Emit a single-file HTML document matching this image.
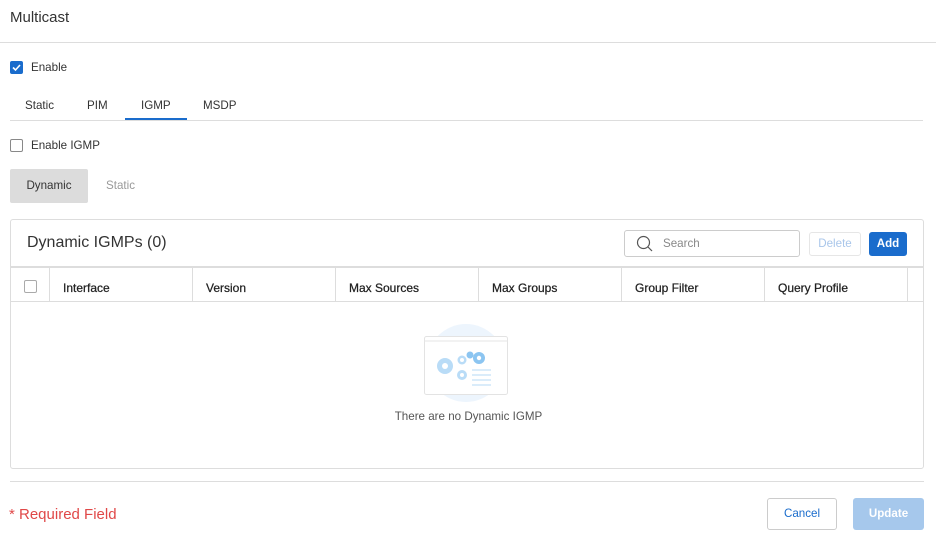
<!DOCTYPE html>
<html><head><meta charset="utf-8"><style>
*{box-sizing:border-box;margin:0;padding:0}
body{width:936px;height:558px;background:#fff;font-family:"Liberation Sans",sans-serif;color:#333;position:relative;overflow:hidden;font-size:11.6px}
.a{position:absolute}
.cb{position:absolute;width:13px;height:13px;border:1px solid #888;border-radius:2px;background:#fff}
.col{position:absolute;top:0;height:34px;border-left:1px solid #ddd;padding-left:13px;line-height:40px;font-size:12px;color:#222;-webkit-text-stroke:0.25px #222}
</style></head><body>
<div class="a" style="left:10px;top:9px;font-size:15px;color:#333">Multicast</div>
<div class="a" style="left:0;top:42px;width:936px;height:1px;background:#ddd"></div>
<div class="cb" style="left:10px;top:61px;background:#1a6ccc;border-color:#1a6ccc"><svg width="11" height="11" viewBox="0 0 11 11" style="position:absolute;left:0;top:0"><path d="M2 5.5 L4.5 8 L9 3" stroke="#fff" stroke-width="1.6" fill="none"/></svg></div>
<div class="a" style="left:31px;top:61px">Enable</div>
<div class="a" style="left:25px;top:99px">Static</div>
<div class="a" style="left:87px;top:99px">PIM</div>
<div class="a" style="left:141px;top:99px">IGMP</div>
<div class="a" style="left:203px;top:99px">MSDP</div>
<div class="a" style="left:10px;top:120px;width:913px;height:1px;background:#ddd"></div>
<div class="a" style="left:125px;top:118px;width:62px;height:2px;background:#1a6ccc"></div>
<div class="cb" style="left:10px;top:139px"></div>
<div class="a" style="left:31px;top:139px">Enable IGMP</div>
<div class="a" style="left:10px;top:169px;width:78px;height:34px;background:#dcdcdc;border-radius:2px;text-align:center;line-height:34px;color:#333">Dynamic</div>
<div class="a" style="left:106px;top:179px;color:#999">Static</div>
<div class="a" style="left:10px;top:219px;width:914px;height:250px;border:1px solid #ddd;border-radius:3px"></div>
<div class="a" style="left:27px;top:234px;font-size:16px;color:#333">Dynamic IGMPs (0)</div>
<div class="a" style="left:624px;top:230px;width:176px;height:27px;border:1px solid #ccc;border-radius:3px"><svg width="20" height="20" viewBox="0 0 20 20" style="position:absolute;left:10px;top:3px"><circle cx="8.5" cy="8.5" r="6" stroke="#555" stroke-width="1.2" fill="none"/><path d="M13 13 L17 17" stroke="#555" stroke-width="1.2"/></svg><span style="position:absolute;left:38px;top:6px;color:#888">Search</span></div>
<div class="a" style="left:809px;top:232px;width:52px;height:24px;border:1px solid #e6e6e6;border-radius:3px;color:#a9c6ea;text-align:center;line-height:22px">Delete</div>
<div class="a" style="left:869px;top:232px;width:38px;height:24px;background:#1a6ccc;border-radius:3px;color:#fff;text-align:center;line-height:24px;font-weight:bold">Add</div>
<div class="a" style="left:11px;top:266px;width:912px;height:2px;background:#ddd"></div>
<div class="a" style="left:11px;top:268px;width:912px;height:34px;border-bottom:1px solid #ddd">
<div class="cb" style="left:13px;top:12px;border-color:#aaa"></div>
<div class="col" style="left:38px">Interface</div>
<div class="col" style="left:181px">Version</div>
<div class="col" style="left:324px">Max Sources</div>
<div class="col" style="left:467px">Max Groups</div>
<div class="col" style="left:610px">Group Filter</div>
<div class="col" style="left:753px">Query Profile</div>
<div class="col" style="left:896px"></div>
</div>
<svg class="a" style="left:420px;top:322px" width="92" height="86" viewBox="0 0 92 86">
<circle cx="46" cy="41" r="39" fill="#edf5fd"/>
<rect x="4.5" y="14.5" width="83" height="58" rx="2" fill="#fff" stroke="#e3e3e3"/>
<line x1="4.5" y1="19" x2="87.5" y2="19" stroke="#e6e6e6"/>
<g fill="#b9dcf7"><circle cx="25" cy="44" r="8"/><circle cx="42" cy="53" r="5"/><circle cx="42" cy="38" r="4.5"/></g>
<g fill="#8cc5f1"><circle cx="59" cy="36" r="6"/><circle cx="50" cy="33" r="3.5"/></g>
<g fill="#fff"><circle cx="25" cy="44" r="3"/><circle cx="42" cy="53" r="2"/><circle cx="42" cy="38" r="2"/><circle cx="59" cy="36" r="2.2"/></g>
<g stroke="#c4e0f7" stroke-width="1.3"><line x1="52" y1="48" x2="71" y2="48"/><line x1="52" y1="53" x2="71" y2="53"/><line x1="52" y1="58" x2="71" y2="58"/><line x1="52" y1="63" x2="71" y2="63"/></g>
</svg>
<div class="a" style="left:0;width:936px;top:410px;text-align:center;color:#555;padding-left:1px">There are no Dynamic IGMP</div>
<div class="a" style="left:10px;top:481px;width:914px;height:1px;background:#ddd"></div>
<div class="a" style="left:9px;top:506px;color:#e04848;font-size:15px">* Required Field</div>
<div class="a" style="left:767px;top:498px;width:70px;height:32px;border:1px solid #ccc;border-radius:3px;color:#1a6ccc;text-align:center;line-height:30px">Cancel</div>
<div class="a" style="left:853px;top:498px;width:71px;height:32px;background:#a6c8ec;border-radius:3px;color:#fff;text-align:center;line-height:32px;font-weight:bold">Update</div>
</body></html>
